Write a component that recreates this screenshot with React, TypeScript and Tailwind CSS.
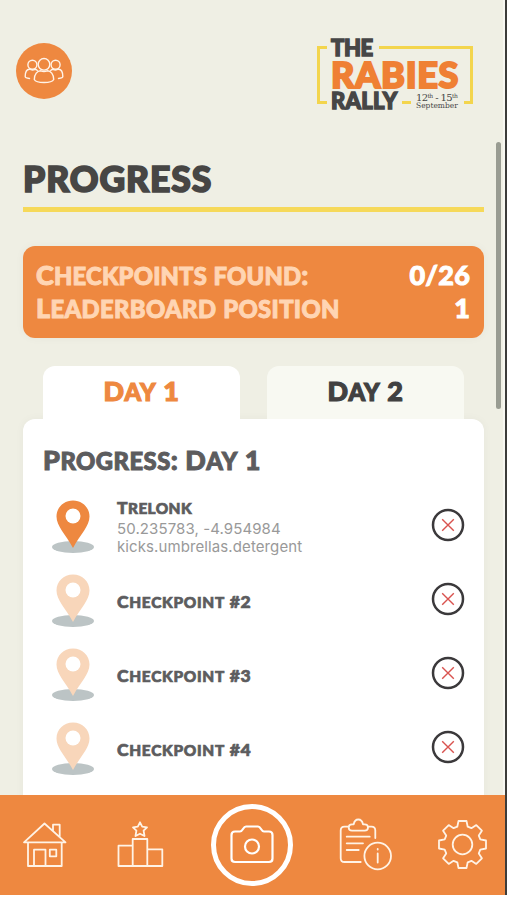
import { ReactNode } from 'react';
import clsx from 'clsx';

interface Checkpoint {
  name: string;
  coords?: string;
  words?: string;
  unlocked?: boolean;
}

const checkpoints: Checkpoint[] = [
  { name: 'Trelonk', coords: '50.235783, -4.954984', words: 'kicks.umbrellas.detergent', unlocked: true },
  { name: 'Checkpoint #2' },
  { name: 'Checkpoint #3' },
  { name: 'Checkpoint #4' },
];

// Capitals and digits keep the full size, lower case turns into slightly smaller capitals.
function Caps({ children }: { children: string }) {
  return (
    <>
      {children.split(/([a-z]+)/).map((part, i) =>
        /^[a-z]/.test(part) ? (
          <span key={i} className="text-[0.88em] leading-none uppercase">
            {part}
          </span>
        ) : (
          part
        )
      )}
    </>
  );
}

function PeopleIcon() {
  return (
    <svg viewBox="0 0 40 28" className="w-10 h-7" fill="none" stroke="#fff3e8" strokeWidth="1.4" strokeLinecap="round">
      <circle cx="20" cy="7.3" r="5.8" />
      <circle cx="8.4" cy="7.8" r="4.5" />
      <circle cx="31.6" cy="7.8" r="4.5" />
      <path d="M10.3 22.500c0-5.500 3-8.700 6.400-8.700 1.800.7 4.800.7 6.600 0 3.400 0 6.400 3.200 6.400 8.700-2 4-17.400 4-19.400 0Z" />
      <path d="M5.500 21.500c-2.200-.2-4.300-.9-4.300-2 0-4.500 2-7.200 4.300-7.300 1.600.8 3.900.9 5.600.1 1 .2 1.600.6 2.200 1.200M34.500 21.500c2.200-.2 4.300-.9 4.300-2 0-4.500-2-7.200-4.300-7.300-1.600.8-3.900.9-5.600.1-1 .2-1.600.6-2.200 1.200" />
    </svg>
  );
}

function Logo() {
  return (
    <div className="relative w-[158px] h-[74px] font-black text-[#464646] whitespace-nowrap">
      <svg viewBox="0 0 158 74" className="absolute inset-0 w-full h-full" fill="none" stroke="#f3d54d" strokeWidth="3">
        <path d="M11 9.500H2.500V64.500H11M63 9.500H155.500V64.500H148M86 64.500H95" />
      </svg>
      <div className="relative pl-[15px] pt-[2px]">
        <div className="text-[22px] leading-[16px] tracking-[-0.4px] [-webkit-text-stroke:1.400px]">THE</div>
        <div className="text-[36px] leading-[28px] mt-[4px] tracking-[0.7px] text-[#ef8034] [-webkit-text-stroke:2px]">
          RABIES
        </div>
        <div className="flex mt-[5px]">
          <div className="w-[85px] text-[22px] leading-[16px] tracking-[0.3px] [-webkit-text-stroke:1.400px]">RALLY</div>
          <div className="font-normal font-['DejaVu_Serif',serif]">
            <div className="text-[10px] leading-[9px] tracking-[-0.6px]">
              12<sup className="text-[6px] leading-none">th</sup> - 15<sup className="text-[6px] leading-none">th</sup>
            </div>
            <div className="text-[7.500px] leading-[8px]">September</div>
          </div>
        </div>
      </div>
    </div>
  );
}

function Pin({ active }: { active?: boolean }) {
  return (
    <svg viewBox="0 0 42 54" className="w-[42px] h-[54px] mt-[4px]">
      <ellipse cx="21" cy="47" rx="21" ry="6" fill="#bcc4c5" />
      <path
        d="M21 .5C11.500.5 4.500 7.600 4.500 16.600c0 9.700 9 17.700 16.500 31.400 7.500-13.700 16.500-21.700 16.500-31.400C37.500 7.600 30.500.5 21 .5Z"
        fill={active ? '#ee8840' : '#f8d6ba'}
      />
      <circle cx="21" cy="16" r="7.500" fill="#fff" />
    </svg>
  );
}

function CrossIcon() {
  return (
    <svg viewBox="0 0 34 34" className="w-[34px] h-[34px]" fill="none">
      <circle cx="17" cy="17" r="15" stroke="#3b393b" strokeWidth="2.500" />
      <path d="m11.200 11.200 11.600 11.600M22.800 11.200 11.200 22.800" stroke="#d9534f" strokeWidth="1.400" />
    </svg>
  );
}

function CheckpointRow({ checkpoint }: { checkpoint: Checkpoint }) {
  return (
    <div className="flex items-center h-[74px] pl-[29px] pr-[19px]">
      <Pin active={checkpoint.unlocked} />
      <div className="ml-[23px] grow text-[#5c5c5e]">
        <div
          className={clsx(
            'text-[17.500px] leading-[19px] font-black mt-[4px] [-webkit-text-stroke:0.700px]',
            checkpoint.unlocked ? 'tracking-[0.4px]' : 'tracking-[0.7px]'
          )}
        >
          <Caps>{checkpoint.name}</Caps>
        </div>
        {checkpoint.coords && (
          <div className="font-['Inter'] text-[15px] leading-[18px] tracking-[0.1px] text-[#999] mt-[3px]">
            <p>{checkpoint.coords}</p>
            <p>{checkpoint.words}</p>
          </div>
        )}
      </div>
      <CrossIcon />
    </div>
  );
}

function Tab({ active, children }: { active?: boolean; children: string }) {
  return (
    <button
      className={clsx(
        'w-[197px] h-[53px] pb-[3px] rounded-t-[12px] text-[27px] leading-[50px] font-black tracking-[0.6px] [-webkit-text-stroke:1.200px]',
        active ? 'bg-white text-[#ee8840]' : 'bg-[#f8f9f2] text-[#414141]'
      )}
    >
      <Caps>{children}</Caps>
    </button>
  );
}

function NavIcon({ children }: { children: ReactNode }) {
  return (
    <svg
      viewBox="0 0 54 54"
      className="w-[54px] h-[54px]"
      fill="none"
      stroke="#fff3e6"
      strokeWidth="1.800"
      strokeLinecap="round"
      strokeLinejoin="round"
    >
      {children}
    </svg>
  );
}

function NavBar() {
  return (
    <nav className="h-[100px] bg-[#ee8840] flex items-center pl-[18px]">
      <NavIcon>
        <path d="M6 24.300 26.500 5.500 47.500 24.300ZM10 24.300V48H43.700V24.300M35 13V6.700H41.700V19M16 48V31.700H27.500V48M31.800 31.700H38.300V38.300H31.800Z" />
      </NavIcon>
      <div className="ml-[40px]">
        <NavIcon>
          <path d="M20.700 48V21H35.300V48M20.700 27.700H6.500V48H50.300V31.300H35.300M28 4.300 30.200 8.700 35 9.300 31.600 12.700 32.500 18 28 15.700 23.500 18 24.400 12.700 21 9.300 25.800 8.700Z" />
        </NavIcon>
      </div>
      <button className="ml-[45px] w-[82px] h-[82px] rounded-full border-[5.500px] border-white grid place-items-center">
        <svg viewBox="0 0 44 40" className="w-[44px] h-[40px]" fill="none" stroke="#fff" strokeWidth="2.200">
          <path d="M5 6.500H10C13 6.500 13 1.500 16 1.500H28C31 1.500 31 6.500 34 6.500H39Q42.500 6.500 42.500 10V33.500Q42.500 37 39 37H5Q1.500 37 1.500 33.500V10Q1.500 6.500 5 6.500Z" />
          <circle cx="22" cy="21.500" r="7" />
        </svg>
      </button>
      <div className="ml-[45px]">
        <NavIcon>
          <path d="M10.500 8.700H6.500Q2.700 8.700 2.700 12.500V40.200Q2.700 44 6.500 44H22.700M30.500 8.700H33.500Q37.300 8.700 37.300 12.500V20M14 6.300Q10.700 6.300 10.700 9.500T14 12.700H26.700Q30 12.700 30 9.500T26.700 6.300H25Q24 1.500 20.300 1.500T15.700 6.300ZM8.700 18.700H31.700M8.700 25.300H25M8.700 32H20.700" />
          <circle cx="39.700" cy="38" r="13.300" />
          <path d="M39.700 35.500V44.500M39.700 31V31.500" />
        </NavIcon>
      </div>
      <div className="ml-[43px]">
        <NavIcon>
          <g transform="translate(27.5 26.5)">
            <circle r="9.800" />
            <path d="M-5.200-17.800-4-23.500H4L5.200-17.800 8.900-16.300 13.800-19.400 19.400-13.800 16.300-8.900 17.800-5.200 23.500-4V4L17.800 5.200 16.300 8.900 19.400 13.800 13.800 19.400 8.900 16.300 5.200 17.800 4 23.500H-4L-5.200 17.800-8.900 16.300-13.800 19.400-19.400 13.800-16.300 8.900-17.800 5.200-23.500 4V-4L-17.800-5.200-16.300-8.900-19.400-13.800-13.800-19.400-8.900-16.300Z" />
          </g>
        </NavIcon>
      </div>
    </nav>
  );
}

export default function App() {
  return (
    <div className="relative w-[507px] h-[900px] bg-white font-['Lato',sans-serif] overflow-hidden">
      <div className="w-[505px] h-[795px] bg-[#efefe4] border-r-2 border-[#f7f7f1] flex flex-col overflow-hidden">
        <header className="flex items-start justify-between h-[160px] shrink-0 pl-4 pr-[29px]">
          <button className="mt-[43px] w-14 h-14 rounded-full bg-[#ee8840] grid place-items-center">
            <PeopleIcon />
          </button>
          <div className="mt-[38px]">
            <Logo />
          </div>
        </header>

        <main className="pl-[23px] pr-[19px]">
          <h1 className="h-[52px] border-b-[5px] border-[#f6d959] text-[35.500px] leading-[37px] font-black tracking-[0.9px] text-[#474644] [-webkit-text-stroke:1.700px]">
            PROGRESS
          </h1>

          <section className="mt-[34px] h-[92px] rounded-[12px] bg-[#ee8840] pl-[13px] pr-[14px] pt-[12px] text-[27px] leading-[33px] font-black tracking-[0.2px] [-webkit-text-stroke:1px] shadow-[0_0_10px_rgba(0,0,0,0.04)]">
            <div className="flex justify-between h-[33px] text-white">
              <span className="text-[#ffd5b3]">
                <Caps>Checkpoints found:</Caps>
              </span>
              <span>0/26</span>
            </div>
            <div className="flex justify-between h-[33px] text-white">
              <span className="text-[#ffd5b3] tracking-[0.38px]">
                <Caps>Leaderboard position</Caps>
              </span>
              <span>1</span>
            </div>
          </section>

          <div className="mt-[28px] px-5 flex justify-between">
            <Tab active>Day 1</Tab>
            <Tab>Day 2</Tab>
          </div>

          <section className="h-[400px] rounded-t-[12px] bg-white shadow-[0_0_10px_rgba(0,0,0,0.04)]">
            <h2 className="h-[69px] pl-[20px] pt-[24px] text-[27px] leading-[33px] font-black tracking-[0.5px] text-[#5c5c5e] [-webkit-text-stroke:1px]">
              <Caps>Progress: Day 1</Caps>
            </h2>
            {checkpoints.map((checkpoint) => (
              <CheckpointRow key={checkpoint.name} checkpoint={checkpoint} />
            ))}
          </section>
        </main>
      </div>
      <div className="w-[505px]">
        <NavBar />
      </div>

      <div className="absolute right-0 top-0 w-[2px] h-[895px] bg-[#3c3c3a]" />
      <div className="absolute left-[496px] top-[142px] w-[5px] h-[267px] rounded-full bg-[#999c92]" />
    </div>
  );
}
